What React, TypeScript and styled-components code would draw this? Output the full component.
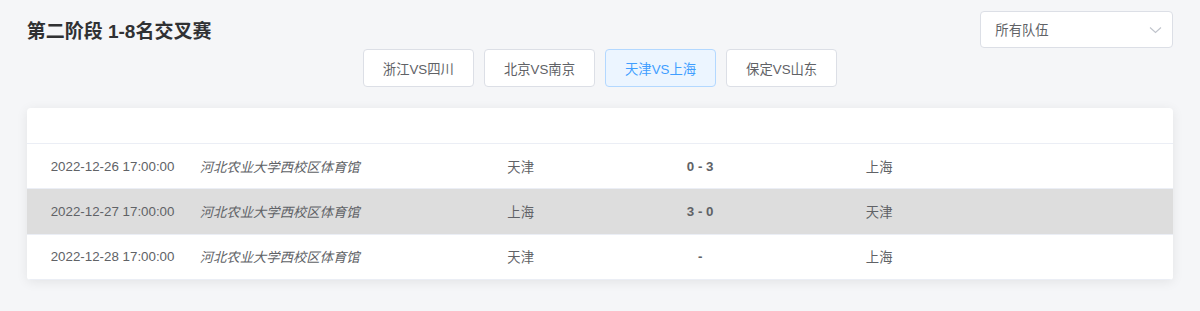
import React from "react";
import styled, { createGlobalStyle } from "styled-components";

const GlobalStyle = createGlobalStyle`
  html, body {
    margin: 0;
    padding: 0;
    background: #f5f6f8;
    font-family: "Liberation Sans", "Noto Sans CJK SC", sans-serif;
  }
  * { box-sizing: border-box; }
`;

const Page = styled.div`
  padding: 11px 26.7px 0 26.7px;
  width: 1200px;
  height: 311px;
  background: #f5f6f8;
`;

const TopBar = styled.div`
  display: flex;
  align-items: center;
  justify-content: space-between;
  height: 37px;
`;

const Title = styled.h2`
  margin: 0;
  margin-top: 4px;
  font-size: 19px;
  font-weight: bold;
  color: #303133;
  line-height: 26px;
`;

const Select = styled.div`
  width: 193px;
  height: 37px;
  border: 1px solid #dcdfe6;
  border-radius: 4px;
  background: #fff;
  display: flex;
  align-items: center;
  justify-content: space-between;
  padding: 0 10px 0 14px;
  font-size: 13.33px;
  color: #606266;
`;

const TabRow = styled.div`
  display: flex;
  justify-content: center;
  gap: 9.6px;
  margin-top: 1px;
`;

const TabButton = styled.button<{ $active?: boolean }>`
  width: 111.5px;
  height: 38px;
  border: 1px solid ${(p) => (p.$active ? "#b3d8ff" : "#dcdfe6")};
  background: ${(p) => (p.$active ? "#ecf5ff" : "#fff")};
  color: ${(p) => (p.$active ? "#409eff" : "#606266")};
  border-radius: 4px;
  font-family: inherit;
  font-size: 13.33px;
  padding: 0;
  cursor: pointer;
`;

const Card = styled.div`
  margin-top: 21px;
  background: #fff;
  border-radius: 4px;
  box-shadow: 0 2px 12px 0 rgba(0, 0, 0, 0.08);
  overflow: hidden;
`;

const HeaderRow = styled.div`
  height: 36px;
  border-bottom: 1px solid #ebeef5;
`;

const Row = styled.div<{ $highlight?: boolean }>`
  display: grid;
  grid-template-columns: 163px 241px 180px 179px 179px 1fr;
  align-items: center;
  height: 45.33px;
  border-bottom: 1px solid #ebeef5;
  background: ${(p) => (p.$highlight ? "#dddddd" : "#fff")};
  font-size: 13.33px;
  color: #606266;
`;

const DateCell = styled.div`
  padding-left: 24px;
  white-space: nowrap;
`;

const VenueCell = styled.div`
  padding-left: 10px;
  font-style: italic;
  white-space: nowrap;
`;

const CenterCell = styled.div`
  text-align: center;
`;

const ScoreCell = styled.div`
  text-align: center;
  font-weight: bold;
`;

const Chevron = () => (
  <svg width="13" height="8" viewBox="0 0 13 8">
    <path d="M1 1.5 L6.5 6.5 L12 1.5" fill="none" stroke="#c0c4cc" strokeWidth="1.1" />
  </svg>
);

const tabs = ["浙江VS四川", "北京VS南京", "天津VS上海", "保定VS山东"];

const matches = [
  { date: "2022-12-26 17:00:00", venue: "河北农业大学西校区体育馆", home: "天津", score: "0 - 3", away: "上海" },
  { date: "2022-12-27 17:00:00", venue: "河北农业大学西校区体育馆", home: "上海", score: "3 - 0", away: "天津", hl: true },
  { date: "2022-12-28 17:00:00", venue: "河北农业大学西校区体育馆", home: "天津", score: "-", away: "上海" },
];

export default function App() {
  return (
    <>
      <GlobalStyle />
      <Page>
        <TopBar>
          <Title>第二阶段 1-8名交叉赛</Title>
          <Select>
            <span>所有队伍</span>
            <Chevron />
          </Select>
        </TopBar>
        <TabRow>
          {tabs.map((t) => (
            <TabButton key={t} $active={t === "天津VS上海"}>
              {t}
            </TabButton>
          ))}
        </TabRow>
        <Card>
          <HeaderRow />
          {matches.map((m) => (
            <Row key={m.date} $highlight={m.hl}>
              <DateCell>{m.date}</DateCell>
              <VenueCell>{m.venue}</VenueCell>
              <CenterCell>{m.home}</CenterCell>
              <ScoreCell>{m.score}</ScoreCell>
              <CenterCell>{m.away}</CenterCell>
              <div />
            </Row>
          ))}
        </Card>
      </Page>
    </>
  );
}
